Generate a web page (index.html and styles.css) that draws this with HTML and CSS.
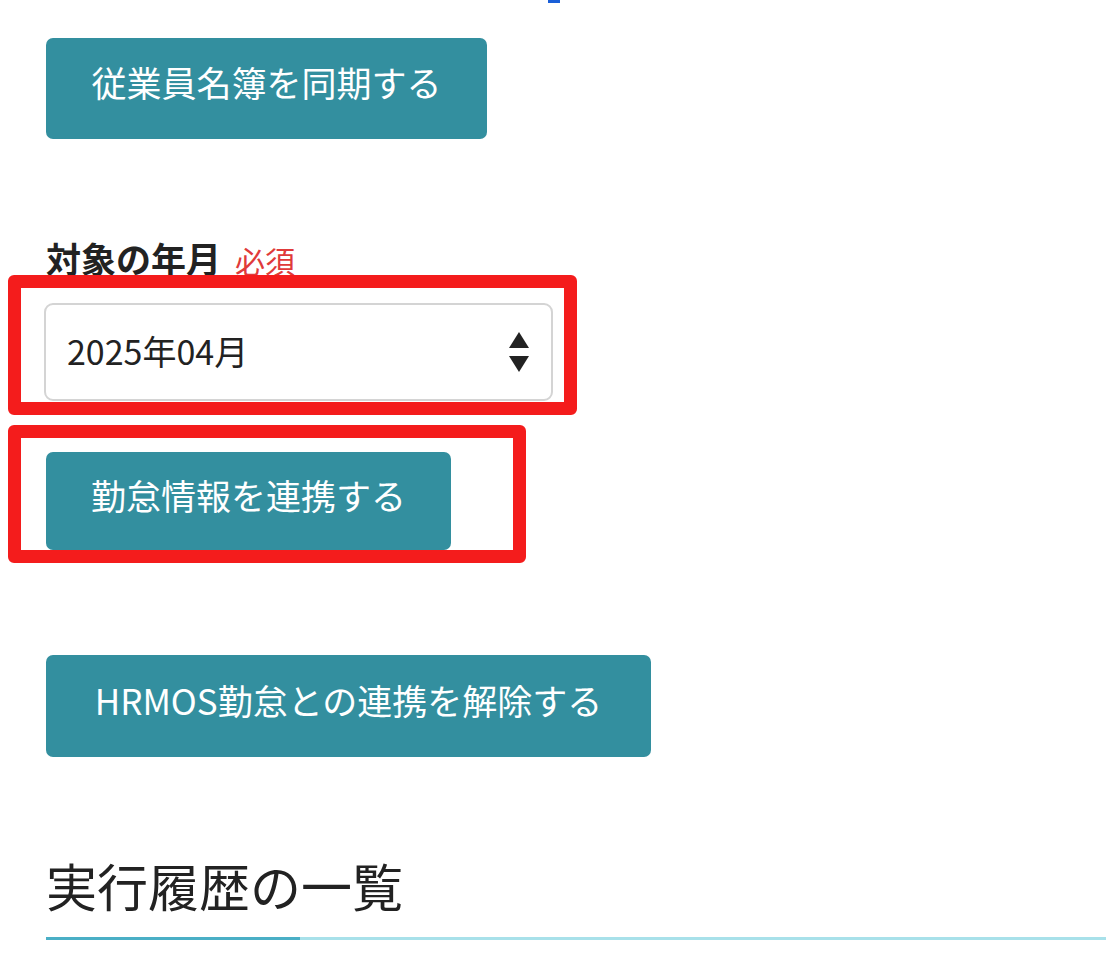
FILE: index.html
```html
<!DOCTYPE html>
<html lang="ja">
<head>
    <meta charset="UTF-8">
    <meta name="viewport" content="width=device-width, initial-scale=1.0">
    <title>HRMOS勤怠 連携設定</title>
    <link rel="stylesheet" href="styles.css">
</head>
<body>
    <div class="top-mark"></div>

    <button class="btn btn-sync">従業員名簿を同期する</button>

    <div class="field-label">対象の年月<span class="required">必須</span></div>
    <div class="select-box">
        <span>2025年04月</span>
        <svg class="select-arrows" width="20" height="40" viewBox="0 0 20 40">
            <polygon points="10,0 20,16 0,16" fill="#222"/>
            <polygon points="0,24 20,24 10,40" fill="#222"/>
        </svg>
    </div>

    <button class="btn btn-link">勤怠情報を連携する</button>

    <button class="btn btn-unlink">HRMOS勤怠との連携を解除する</button>

    <h2 class="section-title">実行履歴の一覧</h2>

    <!-- 注釈の赤枠 -->
    <div class="mark mark-select"></div>
    <div class="mark mark-button"></div>
</body>
</html>
```

FILE: styles.css
```css
body {
    margin: 0;
    padding: 0 0 0 46px;
    background-color: #fff;
    color: #222;
    font-family: "Noto Sans CJK JP", "Noto Sans", sans-serif;
    position: relative;
    min-height: 956px;
    overflow: hidden;
}
.top-mark {
    width: 12px;
    height: 3px;
    margin-left: 502px;
    background-color: #1a5fd8;
}
.btn {
    display: block;
    background-color: #338f9f;
    color: #fff;
    border: none;
    border-radius: 7px;
    padding: 0 44px 14px;
    font-family: inherit;
    font-size: 35px;
    cursor: pointer;
}
.btn-sync {
    margin-top: 35px;
    height: 101px;
    width: 441px;
}
.field-label {
    margin-top: 99px;
    line-height: 40px;
    font-size: 35px;
    font-weight: bold;
}
.required {
    margin-left: 14px;
    font-size: 30px;
    font-weight: normal;
    color: #e03a3a;
}
.select-box {
    display: flex;
    align-items: center;
    justify-content: space-between;
    box-sizing: border-box;
    width: 509px;
    height: 98px;
    margin: 23px 0 0 -2px;
    padding: 0 22px 4px 21px;
    border: 2px solid #d4d4d4;
    border-radius: 9px;
    font-size: 34px;
}
.select-arrows {
    margin-top: 4px;
}
.btn-link {
    margin-top: 51px;
    height: 98px;
    width: 405px;
}
.btn-unlink {
    margin-top: 105px;
    height: 102px;
    width: 605px;
}
.section-title {
    position: relative;
    margin: 98px 0 0;
    padding-bottom: 22px;
    line-height: 60px;
    font-size: 51px;
    font-weight: normal;
    border-bottom: 3px solid #a8e1ea;
}
.section-title::after {
    content: "";
    position: absolute;
    left: 0;
    bottom: -3px;
    width: 254px;
    height: 3px;
    background-color: #4aafc6;
}
.mark {
    position: absolute;
    box-sizing: border-box;
    border: 13px solid #f41c1c;
    border-radius: 6px;
}
.mark-select {
    left: 8px;
    top: 275px;
    width: 569px;
    height: 140px;
}
.mark-button {
    left: 8px;
    top: 425px;
    width: 518px;
    height: 138px;
}
```
